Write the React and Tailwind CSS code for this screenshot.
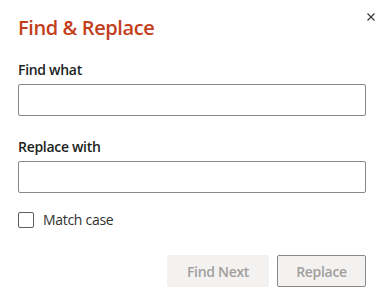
export default function App() {
  return (
    <div className="w-[381px] h-[293px] bg-white relative" style={{ fontFamily: '"Open Sans", "Noto Sans", sans-serif' }}>
      <button className="absolute right-[2px] top-[9px] w-[16px] h-[16px] flex items-center justify-center text-[#323130]">
        <svg width="8" height="8" viewBox="0 0 8 8" stroke="currentColor" strokeWidth="1.1">
          <path d="M0.5 0.5 L7.5 7.5 M7.5 0.5 L0.5 7.5" />
        </svg>
      </button>
      <div className="pl-[18px] pr-[15px] pt-[14px] flex flex-col">
        <h1 className="text-[20px] leading-[28px] font-semibold tracking-[-0.4px] text-[#c43e1c]">Find &amp; Replace</h1>
        <label className="mt-[18px] text-[14px] leading-[20px] font-semibold tracking-[-0.3px] text-[#201f1e]">Find what</label>
        <input className="mt-[4px] h-[32px] border border-[#8a8886] rounded-[2px] px-2 text-[14px] outline-none" />
        <label className="mt-[21px] text-[14px] leading-[20px] font-semibold tracking-[-0.3px] text-[#201f1e]">Replace with</label>
        <input className="mt-[4px] h-[32px] border border-[#8a8886] rounded-[2px] px-2 text-[14px] outline-none" />
        <div className="mt-[17px] flex items-center gap-[9px]">
          <span className="w-[16px] h-[16px] border border-[#605e5c] rounded-[2px]" />
          <span className="text-[14px] leading-[20px] tracking-[-0.3px] text-[#323130]">Match case</span>
        </div>
        <div className="mt-[25px] flex justify-end gap-[8px]">
          <button className="w-[102px] h-[32px] rounded-[2px] bg-[#f3f2f1] text-[14px] font-semibold tracking-[-0.3px] text-[#a19f9d]">Find Next</button>
          <button className="w-[89px] h-[32px] rounded-[2px] bg-[#f3f2f1] border border-[#8a8886] text-[14px] font-semibold tracking-[-0.3px] text-[#a19f9d]">Replace</button>
        </div>
      </div>
    </div>
  );
}
